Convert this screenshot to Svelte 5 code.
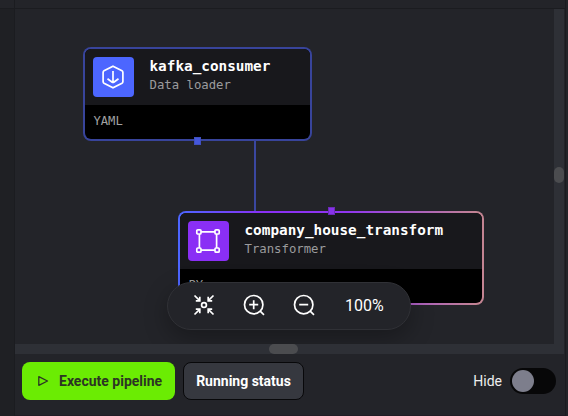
<script>
  const blocks = [
    { id: 'loader', name: 'kafka_consumer', kind: 'Data loader', lang: 'YAML' },
    { id: 'transformer', name: 'company_house_transform', kind: 'Transformer', lang: 'PY' }
  ];
  let hidden = $state(false);
  let zoom = $state(100);
</script>

<div class="app">
  <div class="rail"></div>
  <main>
    <div class="top"></div>
    <div class="viewport">
      <div class="canvas">
        <div class="edge"></div>
        {#each blocks as block}
          <article class="block {block.id}">
            <div class="inner">
              <header>
                <div class="badge">
                  {#if block.id === 'loader'}
                    <svg width="24" height="26" viewBox="0 0 24 26">
                      <path d="M12 2.2 21 6.8Q21.9 7.3 21.9 8.4V17.6Q21.9 18.7 21 19.2L12 23.8 3 19.2Q2.1 18.7 2.1 17.6V8.4Q2.1 7.3 3 6.8Z" />
                      <path d="M12 7v11.6M6.5 14.8 11.2 18.2Q12 18.8 12.8 18.2L17.5 14.8" />
                    </svg>
                  {:else}
                    <svg width="26" height="26" viewBox="0 0 26 26">
                      <path d="M5.9 3.9H20.1M5.9 22.1H20.1M4.4 5.9V20.1M21.6 5.9V20.1" />
                      <rect x="1.8" y="1.8" width="4.2" height="4.2" rx="1" />
                      <rect x="20" y="1.8" width="4.2" height="4.2" rx="1" />
                      <rect x="1.8" y="20" width="4.2" height="4.2" rx="1" />
                      <rect x="20" y="20" width="4.2" height="4.2" rx="1" />
                    </svg>
                  {/if}
                </div>
                <div class="titles">
                  <div class="name">{block.name}</div>
                  <div class="kind">{block.kind}</div>
                </div>
              </header>
              <div class="lang">{block.lang}</div>
            </div>
            <i class="port"></i>
          </article>
        {/each}
        <div class="tools">
          <button aria-label="Reset view" onclick={() => (zoom = 100)}>
            <svg width="24" height="24" viewBox="0 0 24 24">
              <circle cx="12" cy="12" r="2.4" />
              <path d="M2.5 2.5 7.7 7.7M21.5 2.5 16.3 7.7M2.5 21.5 7.7 16.3M21.5 21.5 16.3 16.3" />
              <path d="M3.8 7.8H7.8V3.8M20.2 7.8H16.2V3.8M3.8 16.2H7.8V20.2M20.2 16.2H16.2V20.2" />
            </svg>
          </button>
          <button aria-label="Zoom in" onclick={() => (zoom += 10)}>
            <svg width="24" height="24" viewBox="0 0 24 24">
              <circle cx="11.7" cy="11.7" r="9.2" />
              <path d="M18.2 18.2 22 21.8M7.2 11.7H16.2M11.7 7.2V16.2" />
            </svg>
          </button>
          <button aria-label="Zoom out" onclick={() => (zoom -= 10)}>
            <svg width="24" height="24" viewBox="0 0 24 24">
              <circle cx="11.7" cy="11.7" r="9.2" />
              <path d="M18.2 18.2 22 21.8M7.2 11.7H16.2" />
            </svg>
          </button>
          <span>{zoom}%</span>
        </div>
      </div>
      <div class="vbar"><i></i></div>
      <div class="hbar"><i></i></div>
    </div>
    <footer>
      <button class="run">
        <svg width="12" height="12" viewBox="0 0 12 12"><path d="M1.8 1.7 10.5 6 1.8 10.3Z" /></svg>
        <span>Execute pipeline</span>
      </button>
      <button class="status">Running status</button>
      <div class="hide">
        <span>Hide</span>
        <button class="switch" class:on={hidden} aria-label="Hide" onclick={() => (hidden = !hidden)}><i></i></button>
      </div>
    </footer>
  </main>
  <div class="side"></div>
</div>

<style>
  :global(body) { background: #232429; }
  .app {
    display: flex;
    width: 568px;
    height: 416px;
    overflow: hidden;
    background: #232429;
    color: #fff;
    font-family: Roboto, sans-serif;
  }
  .app * { box-sizing: border-box; }
  button { border: 0; margin: 0; padding: 0; background: none; color: inherit; font: inherit; }
  svg { display: block; fill: none; stroke: #fff; stroke-width: 1.7; }
  .rail { width: 15px; background: linear-gradient(#232429 8px, #1b1c20 8px, #1b1c20 9px, #1f2024 9px); border-right: 1px solid #1b1c20; }
  main { width: 550px; display: flex; flex-direction: column; }
  .side { width: 3px; border-left: 1px solid #1b1c20; }
  .top { height: 9px; border-bottom: 1px solid #1b1c20; }
  .viewport {
    height: 345px;
    width: 549px;
    display: grid;
    grid-template: 335px 10px / 539px 10px;
  }
  .canvas { position: relative; overflow: hidden; }
  .vbar { grid-row: 1 / 3; grid-column: 2; background: #2e3036; padding-top: 158px; }
  .vbar i { display: block; height: 16px; border-radius: 5px; background: #4b4c4f; }
  .hbar { grid-row: 2; grid-column: 1; background: #2e3036; padding-left: 254px; }
  .hbar i { display: block; width: 29px; height: 10px; border-radius: 5px; background: #4b4c4f; }

  .edge { position: absolute; left: 239px; top: 132px; width: 2px; height: 70px; background: #3a47a0; }
  .block { position: absolute; height: 94px; padding: 2px; border-radius: 8px; }
  .loader { left: 68px; top: 38px; width: 229px; background: #38449b; }
  .transformer { left: 163px; top: 202px; width: 306px; background: linear-gradient(90deg, #4c66ff 0%, #8a2ff5 28%, #8f35ef 55%, #c38492 98%); }
  .inner { height: 90px; border-radius: 6px; overflow: hidden; background: #000; }
  header { display: flex; height: 56px; padding: 8px 8px 8px 8.3px; background: #18181c; }
  .badge { flex: none; width: 40.4px; height: 40px; border-radius: 4px; background: #4c66ff; display: flex; align-items: center; justify-content: center; }
  .transformer .badge { background: #8a2ff5; }
  .titles { padding-left: 15.8px; font-family: "DejaVu Sans Mono", monospace; white-space: nowrap; }
  .name { font-size: 14.35px; font-weight: 700; line-height: 19px; }
  .kind { font-size: 12.3px; line-height: 18px; color: #9b9b9d; }
  .lang { padding: 7px 0 0 8.4px; font: 12.2px/18px "DejaVu Sans Mono", monospace; color: #a1a1a3; }
  .port { position: absolute; width: 7px; height: 8px; }
  .loader .port { left: 111px; bottom: -4px; background: #4457dc; border: 1px solid #3f4fc0; }
  .transformer .port { left: 150px; top: -4px; background: #8732e8; border: 1px solid #6b2bb8; }

  .tools {
    position: absolute;
    left: 152px;
    top: 273px;
    width: 244px;
    height: 48px;
    display: flex;
    align-items: center;
    gap: 26px;
    padding: 0 0 2px 24px;
    border: 1px solid #303136;
    border-radius: 24px;
    background: #232429;
    box-shadow: 0 8px 24px #0000004d;
  }
  .tools span { font-size: 16px; margin-left: 3px; }

  footer { flex: 1; display: flex; gap: 8px; padding: 8px 9px 0 7px; align-items: flex-start; border-bottom: 1px solid #211c25; }
  .run, .status { height: 38px; border-radius: 8px; font-size: 14px; font-weight: 700; white-space: nowrap; }
  .run { width: 153px; display: flex; align-items: center; gap: 10px; padding-left: 15px; background: #6bec03; color: #2b3524; }
  .run svg { stroke: #2b3524; stroke-width: 1.3; stroke-linejoin: round; }
  .status { width: 121px; background: #36383f; border: 1px solid #08080a; }
  .hide { margin-left: auto; margin-top: 6px; display: flex; align-items: center; gap: 8px; font-size: 14px; color: #eee; }
  .switch { width: 46px; height: 26px; padding: 2px; border-radius: 13px; background: #070708; }
  .switch i { display: block; width: 22px; height: 22px; border-radius: 50%; background: #7d7e8c; }
  .switch.on i { margin-left: 20px; }
</style>
